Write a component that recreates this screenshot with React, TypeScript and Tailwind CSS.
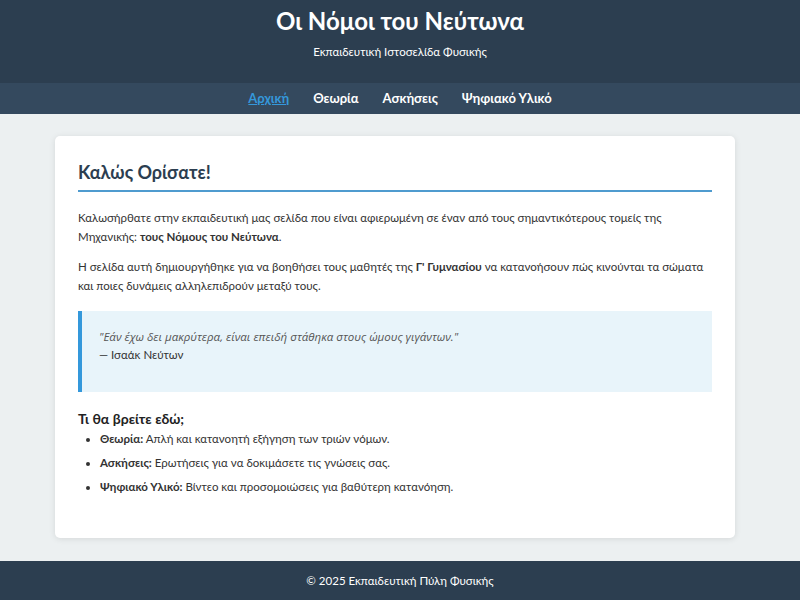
export default function App() {
  return (
    <div
      className="min-h-screen bg-[#ecf0f1] flex flex-col text-[#333]"
      style={{ fontFamily: 'Lato, "Noto Sans", sans-serif' }}
    >
      <header className="bg-[#2c3e50] text-white text-center h-[83px] pt-[4px]">
        <h1 className="text-[24px] font-bold leading-[34px]">
          Οι Νόμοι του Νεύτωνα
        </h1>
        <p className="text-[11.5px] mt-[5px]">
          Εκπαιδευτική Ιστοσελίδα Φυσικής
        </p>
      </header>

      <nav className="bg-[#34495e] h-[31px] flex items-center justify-center gap-[24px] text-[13px] font-bold text-white">
        <a className="text-[#3498db] underline">Αρχική</a>
        <a>Θεωρία</a>
        <a>Ασκήσεις</a>
        <a>Ψηφιακό Υλικό</a>
      </nav>

      <main className="flex-1 pl-[55px] pt-[22px] pb-[23px]">
        <div className="w-[680px] bg-white rounded-[5px] shadow-[0_1px_6px_rgba(0,0,0,0.1)] px-[23px] pt-[22px] pb-[30px] h-[402px]">
          <h2 className="text-[18px] font-bold text-[#2c3e50] leading-[28px] pb-[4px] border-b-2 border-[#4f9bcf]">
            Καλώς Ορίσατε!
          </h2>

          <p className="text-[11.5px] leading-[19px] mt-[16px]">
            Καλωσήρθατε στην εκπαιδευτική μας σελίδα που είναι αφιερωμένη σε
            έναν από τους σημαντικότερους τομείς της Μηχανικής:{" "}
            <strong>τους Νόμους του Νεύτωνα</strong>.
          </p>

          <p className="text-[11.5px] leading-[19px] mt-[11px]">
            Η σελίδα αυτή δημιουργήθηκε για να βοηθήσει τους μαθητές της{" "}
            <strong>Γ' Γυμνασίου</strong> να κατανοήσουν πώς κινούνται τα
            σώματα και ποιες δυνάμεις αλληλεπιδρούν μεταξύ τους.
          </p>

          <blockquote className="mt-[16px] bg-[#e8f4fa] border-l-4 border-[#3498db] h-[81px] pl-[17px] pt-[17px] text-[11.5px] leading-[18px]">
            <em
              className="text-[#555]"
              style={{ fontFamily: '"Open Sans", sans-serif' }}
            >
              "Εάν έχω δει μακρύτερα, είναι επειδή στάθηκα στους ώμους γιγάντων."
            </em>
            <br />
            — Ισαάκ Νεύτων
          </blockquote>

          <h3 className="text-[14px] font-bold text-[#222] mt-[17px] leading-[20px]">
            Τι θα βρείτε εδώ;
          </h3>

          <ul className="list-disc pl-[22px] text-[11.5px] leading-[18px] mt-[1px] space-y-[6px]">
            <li>
              <strong>Θεωρία:</strong> Απλή και κατανοητή εξήγηση των τριών
              νόμων.
            </li>
            <li>
              <strong>Ασκήσεις:</strong> Ερωτήσεις για να δοκιμάσετε τις γνώσεις
              σας.
            </li>
            <li>
              <strong>Ψηφιακό Υλικό:</strong> Βίντεο και προσομοιώσεις για
              βαθύτερη κατανόηση.
            </li>
          </ul>
        </div>
      </main>

      <footer className="bg-[#2c3e50] text-white text-center h-[39px] flex items-center justify-center text-[11.5px]">
        © 2025 Εκπαιδευτική Πύλη Φυσικής
      </footer>
    </div>
  );
}
